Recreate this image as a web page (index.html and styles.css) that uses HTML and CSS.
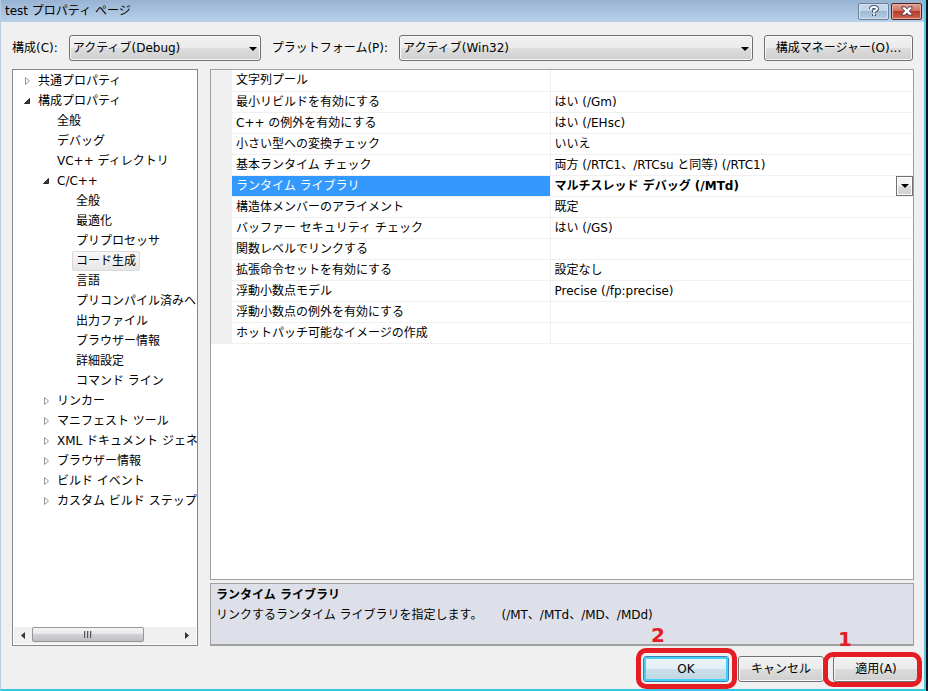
FILE: index.html
```html
<!DOCTYPE html>
<html lang="ja">
<head>
    <meta charset="UTF-8">
    <meta name="viewport" content="width=device-width, initial-scale=1.0">
    <title>test プロパティ ページ</title>
    <link rel="stylesheet" href="styles.css">
</head>
<body>
    <!-- 展開マーク -->
    <svg class="defs" width="0" height="0" aria-hidden="true">
        <symbol id="closed" viewBox="0 0 13 20"><path d="M4.5 6.5v7l4-3.5z" fill="#fff" stroke="#989898"/></symbol>
        <symbol id="open" viewBox="0 0 13 20"><path d="M8.5 7.5v5h-5z" fill="#404040" stroke="#262626"/></symbol>
    </svg>

    <div class="window">
        <header class="titlebar">
            <h1>test プロパティ ページ</h1>
            <button class="caption-button" aria-label="ヘルプ">
                <svg width="12" height="12" viewBox="0 0 12 12"><path d="M3 4V3.500Q3 2 6 2T9 4Q9 5 6 6.200V7.500M6 9v2" fill="none" stroke="#46566e" stroke-width="4"/><path d="M3 4V3.500Q3 2 6 2T9 4Q9 5 6 6.200V7.500M6 8.800v1.800" fill="none" stroke="#fff" stroke-width="2"/></svg>
            </button>
            <button class="caption-button close" aria-label="閉じる">
                <svg width="12" height="10" viewBox="0 0 12 10"><path d="M1 .8h3.200L6 2.900 7.800.8H11v1.400L8.400 5 11 7.800v1.400H7.800L6 7.100 4.200 9.200H1V7.800L3.600 5 1 2.200z" fill="#fff" stroke="#4d3b4a"/></svg>
            </button>
        </header>

        <div class="toolbar">
            <label for="config">構成(C):</label>
            <span class="combo combo-config">
                <select id="config"><option>アクティブ(Debug)</option></select>
            </span>
            <label for="platform">プラットフォーム(P):</label>
            <span class="combo combo-platform">
                <select id="platform"><option>アクティブ(Win32)</option></select>
            </span>
            <button class="button manager">構成マネージャー(O)...</button>
        </div>

        <main class="content">
            <nav class="tree-panel">
                <ul class="tree">
                    <li><div class="node"><svg><use href="#closed"/></svg><span>共通プロパティ</span></div></li>
                    <li>
                        <div class="node"><svg><use href="#open"/></svg><span>構成プロパティ</span></div>
                        <ul>
                            <li><div class="node leaf"><span>全般</span></div></li>
                            <li><div class="node leaf"><span>デバッグ</span></div></li>
                            <li><div class="node leaf"><span>VC++ ディレクトリ</span></div></li>
                            <li>
                                <div class="node"><svg><use href="#open"/></svg><span>C/C++</span></div>
                                <ul>
                                    <li><div class="node leaf"><span>全般</span></div></li>
                                    <li><div class="node leaf"><span>最適化</span></div></li>
                                    <li><div class="node leaf"><span>プリプロセッサ</span></div></li>
                                    <li><div class="node leaf selected"><span>コード生成</span></div></li>
                                    <li><div class="node leaf"><span>言語</span></div></li>
                                    <li><div class="node leaf"><span>プリコンパイル済みヘ</span></div></li>
                                    <li><div class="node leaf"><span>出力ファイル</span></div></li>
                                    <li><div class="node leaf"><span>ブラウザー情報</span></div></li>
                                    <li><div class="node leaf"><span>詳細設定</span></div></li>
                                    <li><div class="node leaf"><span>コマンド ライン</span></div></li>
                                </ul>
                            </li>
                            <li><div class="node"><svg><use href="#closed"/></svg><span>リンカー</span></div></li>
                            <li><div class="node"><svg><use href="#closed"/></svg><span>マニフェスト ツール</span></div></li>
                            <li><div class="node"><svg><use href="#closed"/></svg><span>XML ドキュメント ジェネ</span></div></li>
                            <li><div class="node"><svg><use href="#closed"/></svg><span>ブラウザー情報</span></div></li>
                            <li><div class="node"><svg><use href="#closed"/></svg><span>ビルド イベント</span></div></li>
                            <li><div class="node"><svg><use href="#closed"/></svg><span>カスタム ビルド ステップ</span></div></li>
                        </ul>
                    </li>
                </ul>
                <div class="scrollbar">
                    <button class="scroll-arrow" aria-label="左へスクロール"><svg width="4" height="7" viewBox="0 0 4 7"><path d="M4 0v7L0 3.500z" fill="#333"/></svg></button>
                    <div class="scroll-track">
                        <div class="scroll-thumb"><i></i><i></i><i></i></div>
                    </div>
                    <button class="scroll-arrow" aria-label="右へスクロール"><svg width="4" height="7" viewBox="0 0 4 7"><path d="M0 0v7l4-3.500z" fill="#333"/></svg></button>
                </div>
            </nav>

            <section class="properties">
                <div class="grid">
                    <table>
                        <colgroup><col class="col-gutter"><col class="col-name"><col></colgroup>
                        <tbody>
                            <tr><td></td><th scope="row">文字列プール</th><td></td></tr>
                            <tr><td></td><th scope="row">最小リビルドを有効にする</th><td>はい (/Gm)</td></tr>
                            <tr><td></td><th scope="row">C++ の例外を有効にする</th><td>はい (/EHsc)</td></tr>
                            <tr><td></td><th scope="row">小さい型への変換チェック</th><td>いいえ</td></tr>
                            <tr><td></td><th scope="row">基本ランタイム チェック</th><td>両方 (/RTC1、/RTCsu と同等) (/RTC1)</td></tr>
                            <tr class="current">
                                <td></td>
                                <th scope="row">ランタイム ライブラリ</th>
                                <td><div class="editor"><span>マルチスレッド デバッグ (/MTd)</span><button class="drop" aria-label="値を選択"></button></div></td>
                            </tr>
                            <tr><td></td><th scope="row">構造体メンバーのアライメント</th><td>既定</td></tr>
                            <tr><td></td><th scope="row">バッファー セキュリティ チェック</th><td>はい (/GS)</td></tr>
                            <tr><td></td><th scope="row">関数レベルでリンクする</th><td></td></tr>
                            <tr><td></td><th scope="row">拡張命令セットを有効にする</th><td>設定なし</td></tr>
                            <tr><td></td><th scope="row">浮動小数点モデル</th><td>Precise (/fp:precise)</td></tr>
                            <tr><td></td><th scope="row">浮動小数点の例外を有効にする</th><td></td></tr>
                            <tr><td></td><th scope="row">ホットパッチ可能なイメージの作成</th><td></td></tr>
                        </tbody>
                    </table>
                </div>
                <div class="description">
                    <h2>ランタイム ライブラリ</h2>
                    <p>リンクするランタイム ライブラリを指定します。     (/MT、/MTd、/MD、/MDd)</p>
                </div>
            </section>
        </main>

        <footer class="actions">
            <div class="action">
                <button class="button default">OK</button>
                <span class="mark mark-ok"><b>2</b></span>
            </div>
            <div class="action"><button class="button">キャンセル</button></div>
            <div class="action">
                <button class="button">適用(A)</button>
                <span class="mark mark-apply"><b>1</b></span>
            </div>
        </footer>
    </div>
</body>
</html>
```

FILE: styles.css
```css
* {
    box-sizing: border-box;
}

body {
    margin: 0;
    background: #06181f;
    color: #000;
    font-family: "DejaVu Sans", "Noto Sans CJK JP", sans-serif;
    font-size: 12px;
    line-height: 20px;
}

button,
select {
    font: inherit;
    color: inherit;
    padding: 0;
}

h1,
h2,
p,
ul {
    margin: 0;
    padding: 0;
    font-size: 12px;
}

ul {
    list-style: none;
}

.defs {
    position: absolute;
}

.window {
    display: flex;
    flex-direction: column;
    min-height: 100vh;
    margin-right: 2px;
    background: #f0f0f0;
    border-left: 1px solid #b9cde5;
    border-right: 2px solid #5fc4e2;
    border-bottom: 2px solid #3cc3de;
}

/* タイトルバー */
.titlebar {
    display: flex;
    align-items: center;
    gap: 2px;
    height: 22px;
    padding: 0 2px 0 4px;
    background: linear-gradient(#98b3d2, #b9d1ea);
}

.titlebar h1 {
    flex: 1;
    font-weight: normal;
}

.caption-button {
    display: flex;
    align-items: center;
    justify-content: center;
    width: 31px;
    height: 17px;
    border: 1px solid #6c7f99;
    border-radius: 2px;
    background: linear-gradient(#c3d5e9 45%, #9db6d2 50%, #b9d0e8);
    box-shadow: inset 0 0 0 1px #d3e1f0;
}

.caption-button.close {
    border-color: #54202a;
    background: linear-gradient(#e3a395, #cf7261 45%, #b93c28 50%, #d0664f);
    box-shadow: inset 0 0 0 1px #e5aca0;
}

/* 構成の選択 */
.toolbar {
    display: flex;
    align-items: center;
    gap: 11px;
    padding: 13px 11px 8px;
}

.combo {
    position: relative;
    height: 26px;
}

.combo-config {
    width: 192px;
}

.combo-platform {
    flex: 1;
}

.combo select {
    width: 100%;
    height: 26px;
    padding: 0 20px 0 3px;
    appearance: none;
}

.combo select,
.button {
    border: 1px solid #707070;
    border-radius: 3px;
    background: linear-gradient(#f2f2f2, #ebebeb 48%, #dddddd 50%, #cfcfcf);
    box-shadow: inset 0 0 0 1px #f8f8f8;
}

.combo::after,
.drop::after {
    content: "";
    border: 4px solid transparent;
    border-top-color: #000;
    border-bottom: 0;
}

.combo::after {
    position: absolute;
    top: 12px;
    right: 4px;
    pointer-events: none;
}

.button {
    height: 26px;
}

.manager {
    width: 149px;
}

.content {
    display: flex;
    flex: 1;
    gap: 12px;
    padding: 0 10px 0 11px;
}

/* ツリー */
.tree-panel {
    display: flex;
    flex-direction: column;
    width: 186px;
    padding: 1px;
    overflow: hidden;
    background: #fff;
    border: 1px solid #828790;
}

.tree {
    flex: 1;
}

.tree ul {
    padding-left: 19px;
}

.node {
    display: flex;
    padding-left: 7px;
    white-space: nowrap;
}

.node svg {
    flex: none;
    width: 13px;
    height: 20px;
}

.node span {
    padding: 0 3px;
    border: 1px solid transparent;
    line-height: 18px;
}

.leaf {
    padding-left: 20px;
}

.selected span {
    border-color: #d9d9d9;
    border-radius: 2px;
    background: linear-gradient(#f8f8f8, #e6e6e6);
}

.scrollbar {
    display: flex;
    height: 17px;
    padding-bottom: 1px;
    background: #f0f0f0;
}

.scroll-arrow {
    display: flex;
    align-items: center;
    justify-content: center;
    width: 18px;
    border: 0;
    background: none;
}

.scroll-track {
    flex: 1;
}

.scroll-thumb {
    display: flex;
    align-items: center;
    justify-content: center;
    gap: 1px;
    width: 77%;
    height: 15px;
    border: 1px solid #979797;
    border-radius: 2px;
    background: linear-gradient(#f5f5f5, #e6e6e8 48%, #d2d2d5 50%, #bebec3);
}

.scroll-thumb i {
    width: 2px;
    height: 7px;
    background: linear-gradient(90deg, #555 50%, #bbb 50%);
}

/* プロパティ一覧 */
.properties {
    display: flex;
    flex: 1;
    flex-direction: column;
    gap: 3px;
    min-width: 0;
}

.grid {
    flex: 1;
    background: #fff;
    border: 1px solid #a0a0a0;
}

table {
    width: 100%;
    border-collapse: collapse;
    table-layout: fixed;
}

.col-gutter {
    width: 21px;
}

.col-name {
    width: 318px;
}

th,
td {
    height: 21px;
    padding: 0 0 0 4px;
    border-bottom: 1px solid #f0f0f0;
    font-weight: normal;
    text-align: left;
    white-space: nowrap;
}

th {
    border-right: 1px solid #f0f0f0;
}

td:first-child {
    background: #f0f0f0;
}

.current th {
    background: #3399ff;
    color: #fff;
}

.editor {
    display: flex;
    justify-content: space-between;
    font-weight: bold;
}

.drop {
    display: flex;
    align-items: center;
    justify-content: center;
    width: 17px;
    height: 20px;
    border: 1px solid #707070;
    background: linear-gradient(#f2f2f2 50%, #dddddd 50%, #cfcfcf);
    box-shadow: inset 0 0 0 1px #fff;
}

.description {
    height: 63px;
    padding: 1px 5px;
    background: #dde0e8;
    border: 1px solid #a0a0a0;
    border-bottom-width: 2px;
}

.description p {
    white-space: pre;
}

/* ボタン */
.actions {
    display: flex;
    justify-content: flex-end;
    gap: 9px;
    padding: 10px 5px 7px;
}

.action {
    position: relative;
}

.action .button {
    width: 86px;
}

.button.default {
    border-color: #3c7fb1;
    background: linear-gradient(#eef5f9, #e1eef5 48%, #cbe0ea 50%, #bdd6e3);
    box-shadow: inset 0 0 0 2px #46d0f5;
}

/* 押す順番の赤い囲み */
.mark {
    position: absolute;
    border: 5px solid #e51c23;
    border-radius: 10px;
    pointer-events: none;
}

.mark-ok {
    inset: -8px -8px -7px -7px;
}

.mark-apply {
    inset: -4px -3px -5px -10px;
}

.mark b {
    position: absolute;
    top: -28px;
    left: 10px;
    color: #e51c23;
    font-family: "DejaVu Sans", sans-serif;
    font-size: 20px;
}
```
